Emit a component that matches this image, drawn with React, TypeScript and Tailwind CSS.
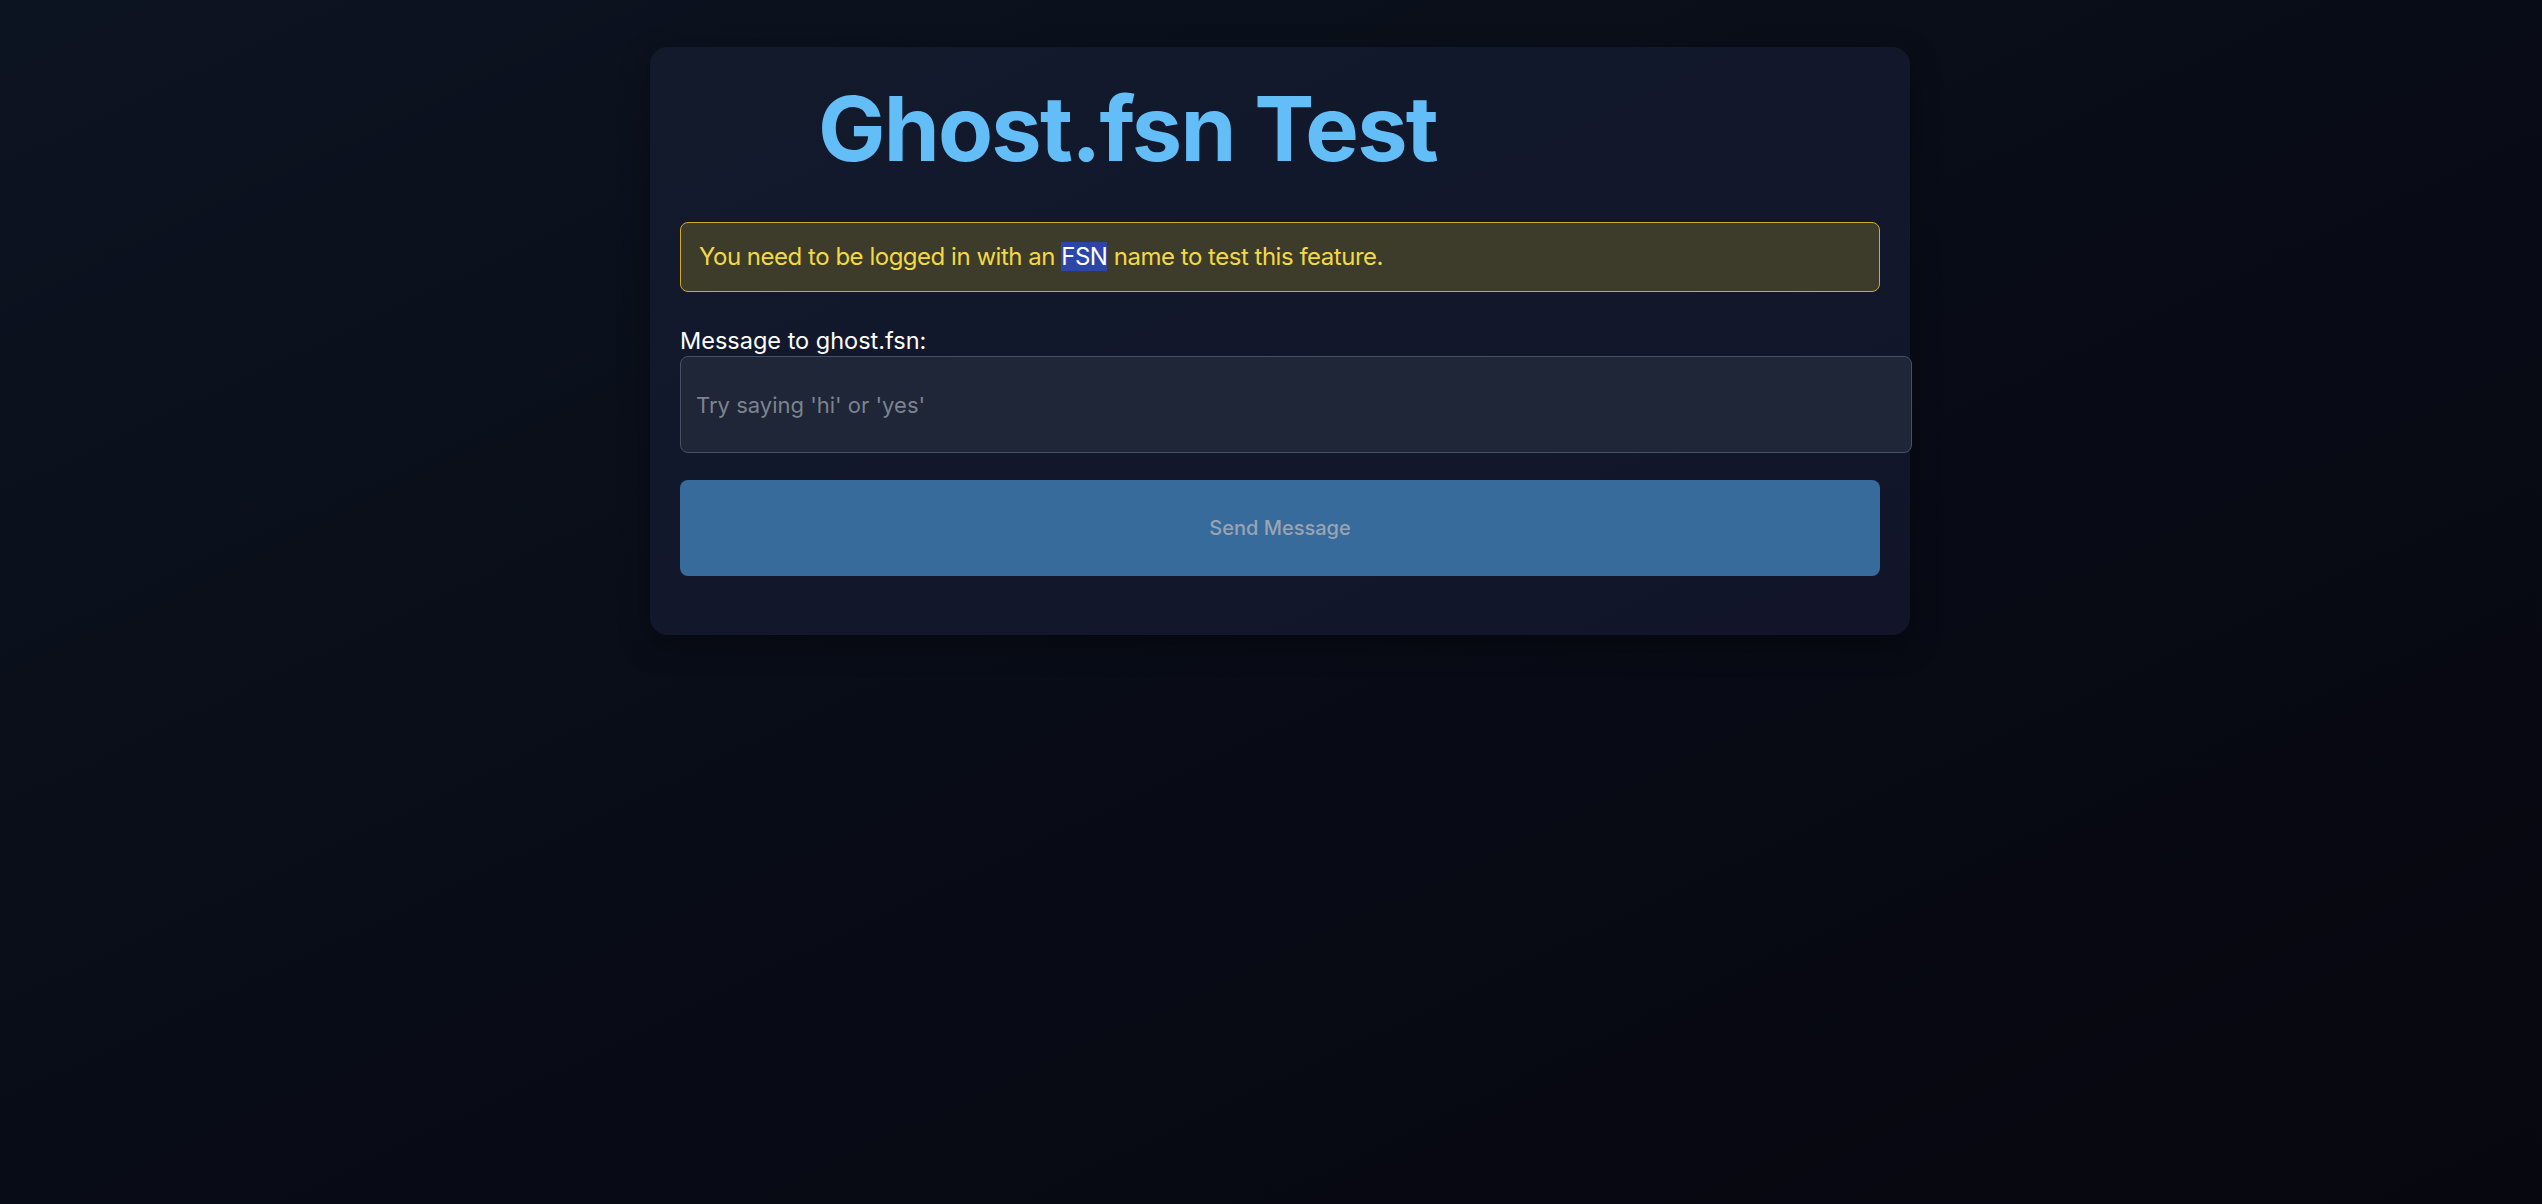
export default function App() {
  return (
    <div className="min-h-[1204px] w-full bg-gradient-to-br from-[#0d1421] via-[#080c16] to-[#07070f] pt-[47px] pl-[18px] font-['Inter',sans-serif]">
      <div className="mx-auto w-[1260px] rounded-[18px] bg-gradient-to-br from-[#121a2c] to-[#12152a] px-[30px] pt-[37px] pb-[59px] shadow-[0_10px_30px_rgba(0,0,0,0.35)]">
        <h1 className="pl-[138px] text-[90px] leading-[90px] font-bold tracking-[-0.02em] text-[#63bdf7]">
          Ghost.fsn Test
        </h1>

        <div className="mt-[48px] rounded-[8px] border border-[#d3ab2b] bg-[#3d3b29] px-[18px] py-[17px] text-[24px] leading-[34px] tracking-[-0.02em] text-[#f3d945]">
          You need to be logged in with an{" "}
          <span className="bg-[#2c45a8] text-white">FSN</span> name to test this feature.
        </div>

        <label className="mt-[34px] block text-[23.5px] leading-[30px] text-white">
          Message to ghost.fsn:
        </label>
        <input
          type="text"
          placeholder="Try saying 'hi' or 'yes'"
          className="block h-[97px] w-[calc(100%+32px)] rounded-[8px] border border-[#465066] bg-[#1e2638] px-[15px] text-[22px] text-white outline-none placeholder:text-[#7d838e]"
        />

        <button
          type="button"
          className="mt-[27px] flex h-[96px] w-full items-center justify-center rounded-[8px] bg-[#376b9c] text-[20px] font-medium text-[#9aa4b3]"
        >
          Send Message
        </button>
      </div>
    </div>
  );
}
